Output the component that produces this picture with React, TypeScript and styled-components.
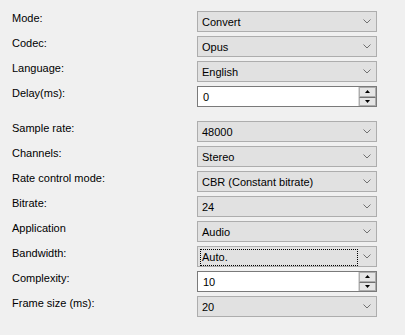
import styled, { createGlobalStyle } from "styled-components";

const GlobalStyle = createGlobalStyle`
  html, body {
    margin: 0;
    padding: 0;
    background: #f0f0f0;
  }
  body {
    font-family: "Liberation Sans", Arial, sans-serif;
    font-size: 11px;
    color: #000;
  }
`;

const Page = styled.div`
  width: 405px;
  height: 335px;
  box-sizing: border-box;
  padding: 11px 0 0 12px;
  display: flex;
  flex-direction: column;
  gap: 14px;
`;

const Section = styled.div`
  display: grid;
  grid-template-columns: 185px 180px;
  row-gap: 4px;
`;

const Label = styled.div`
  height: 21px;
  line-height: 13px;
  padding-top: 1px;
  box-sizing: border-box;
  white-space: nowrap;
`;

const Combo = styled.div`
  position: relative;
  height: 21px;
  box-sizing: border-box;
  border: 1px solid #adadad;
  background: #e1e1e1;
  display: flex;
  align-items: center;
  padding: 1px 0 0 3px;
`;

const ComboText = styled.span<{ $focused?: boolean }>`
  flex: 1;
  line-height: 13px;
  padding: 1px 0 1px 1px;
  margin-right: 18px;
  border: 1px dotted ${({ $focused }) => ($focused ? "#000" : "transparent")};
  margin-left: -1px;
  white-space: nowrap;
`;

const Chevron = styled.svg`
  position: absolute;
  right: 5px;
  top: 7px;
`;

const Spin = styled.div`
  height: 21px;
  box-sizing: border-box;
  border: 1px solid #7a7a7a;
  background: #fff;
  display: flex;
  align-items: stretch;
`;

const SpinValue = styled.span`
  flex: 1;
  padding-left: 5px;
  display: flex;
  align-items: center;
  padding-top: 1px;
`;

const SpinButtons = styled.div`
  width: 17px;
  display: flex;
  flex-direction: column;
  border-left: 1px solid #d9d9d9;
`;

const SpinBtn = styled.div`
  flex: 1;
  background: #e5e5e5;
  border: 1px solid #adadad;
  display: flex;
  align-items: center;
  justify-content: center;
  & + & {
    border-top: 1px solid #707070;
  }
`;

function ChevronIcon() {
  return (
    <Chevron width="8" height="5" viewBox="0 0 8 5">
      <path d="M0.5 0.5 L4 4 L7.5 0.5" fill="none" stroke="#707070" strokeWidth="1" />
    </Chevron>
  );
}

function ComboBox({ value, focused }: { value: string; focused?: boolean }) {
  return (
    <Combo>
      <ComboText $focused={focused}>{value}</ComboText>
      <ChevronIcon />
    </Combo>
  );
}

function SpinBox({ value }: { value: string }) {
  return (
    <Spin>
      <SpinValue>{value}</SpinValue>
      <SpinButtons>
        <SpinBtn>
          <svg width="5" height="3" viewBox="0 0 5 3">
            <path d="M2.5 0 L5 3 L0 3 Z" fill="#000" />
          </svg>
        </SpinBtn>
        <SpinBtn>
          <svg width="5" height="3" viewBox="0 0 5 3">
            <path d="M0 0 L5 0 L2.5 3 Z" fill="#000" />
          </svg>
        </SpinBtn>
      </SpinButtons>
    </Spin>
  );
}

export default function App() {
  return (
    <>
      <GlobalStyle />
      <Page>
        <Section>
          <Label>Mode:</Label>
          <ComboBox value="Convert" />
          <Label>Codec:</Label>
          <ComboBox value="Opus" />
          <Label>Language:</Label>
          <ComboBox value="English" />
          <Label>Delay(ms):</Label>
          <SpinBox value="0" />
        </Section>
        <Section>
          <Label>Sample rate:</Label>
          <ComboBox value="48000" />
          <Label>Channels:</Label>
          <ComboBox value="Stereo" />
          <Label>Rate control mode:</Label>
          <ComboBox value="CBR (Constant bitrate)" />
          <Label>Bitrate:</Label>
          <ComboBox value="24" />
          <Label>Application</Label>
          <ComboBox value="Audio" />
          <Label>Bandwidth:</Label>
          <ComboBox value="Auto." focused />
          <Label>Complexity:</Label>
          <SpinBox value="10" />
          <Label>Frame size (ms):</Label>
          <ComboBox value="20" />
        </Section>
      </Page>
    </>
  );
}
